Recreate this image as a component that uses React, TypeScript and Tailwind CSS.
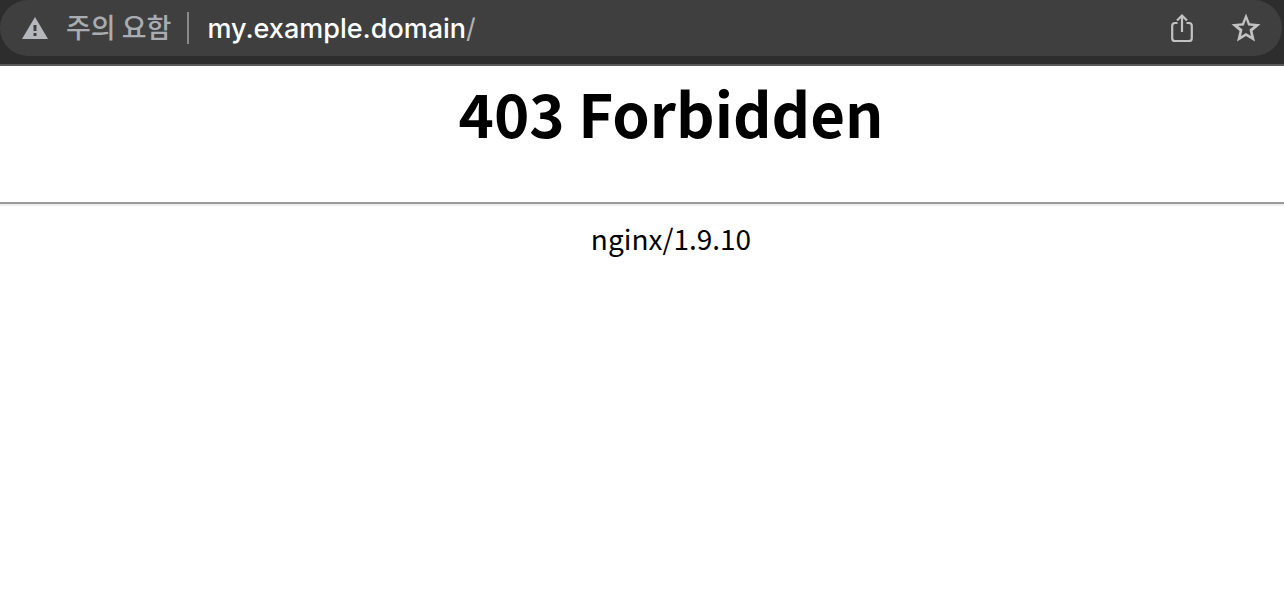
function WarningIcon() {
  return (
    <svg width="26" height="22" viewBox="0 0 26 22" aria-hidden="true">
      <path fill="#b4b8bd" fillRule="evenodd" d="M13 0 26 22H0ZM11.500 8v6h3V8ZM11.500 16v3h3v-3Z" />
    </svg>
  );
}

function ShareIcon() {
  return (
    <svg width="22" height="30" viewBox="0 0 22 30" fill="none" stroke="#c2c2c2" strokeWidth="2.2" aria-hidden="true">
      <path d="M6.500 10H4Q1.200 10 1.200 12.800V25.200Q1.200 28 4 28H18Q20.800 28 20.800 25.200V12.800Q20.800 10 18 10H15.500" />
      <path d="M11 19V2.500M6 7.500l5-5 5 5" />
    </svg>
  );
}

function StarIcon() {
  return (
    <svg width="30" height="30" viewBox="0 0 30 30" aria-hidden="true">
      <path
        fill="#c2c2c2"
        fillRule="evenodd"
        d="M15 0.500 18.900 10.300 29.500 11.200 21.500 18 24 28.500 15 23 6 28.500 8.500 18 0.500 11.200 11.100 10.300ZM15 6.500 12.900 12.400 7.200 12.900 11.500 16.600 10.100 22.900 15 19.900 19.900 22.900 18.500 16.600 22.800 12.900 17.100 12.400Z"
      />
    </svg>
  );
}

export default function App() {
  return (
    <div className="min-h-screen bg-white text-black">
      <header className="border-b-2 border-[#5a5a5a] bg-[#2d2d2d] pr-0.5 pb-2">
        <div className="flex h-14 items-center rounded-full bg-[#3f3f3f] pr-[21px] pl-[22px]">
          <button type="button" className="flex items-center gap-[18px]">
            <WarningIcon />
            <span className="pb-0.5 font-['Noto_Sans_CJK_KR',sans-serif] text-[27px] leading-8 font-medium text-[#a9adb2]">주의 요함</span>
          </button>
          <span className="ml-4 h-8 w-0.5 bg-[#8a8a8a]" />
          <div className="ml-[18px] flex flex-1 items-center pt-0.5 font-[Inter,sans-serif] text-[27px] leading-8">
            <input
              type="text"
              aria-label="URL"
              defaultValue="my.example.domain"
              className="field-sizing-content font-medium text-white outline-none"
            />
            <span className="text-[#b0b0b0]">/</span>
          </div>
          <div className="flex items-center gap-[38px]">
            <button type="button" aria-label="Share">
              <ShareIcon />
            </button>
            <button type="button" aria-label="Bookmark">
              <StarIcon />
            </button>
          </div>
        </div>
      </header>
      <main className="text-center font-['Noto_Sans_CJK_KR',sans-serif]">
        <h1 className="pt-0.5 pb-[46px] pl-[58px] text-[60px] leading-22 font-bold">403 Forbidden</h1>
        <hr className="h-1 border-t-2 border-b-2 border-t-[#999999] border-b-[#eeeeee]" />
        <p className="pt-3 pl-[58px] text-[28px] leading-10">nginx/1.9.10</p>
      </main>
    </div>
  );
}
